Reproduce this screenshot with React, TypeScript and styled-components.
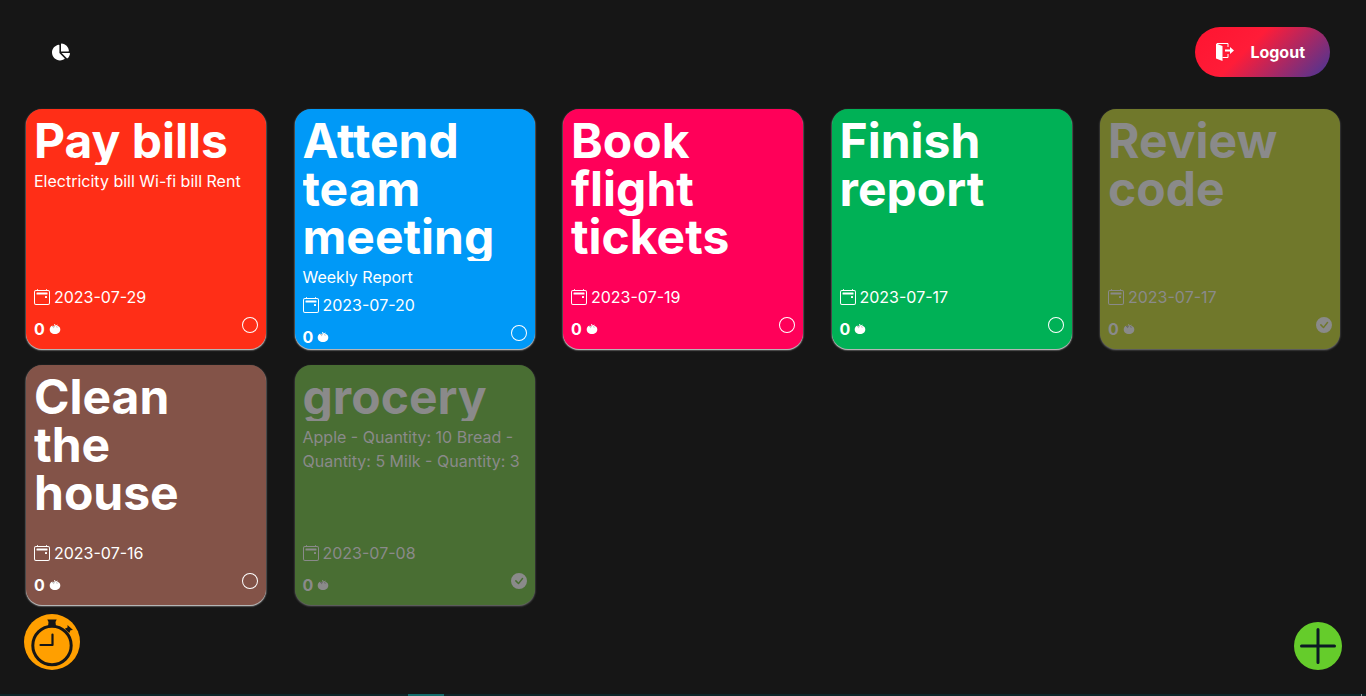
import React from "react";
import styled, { createGlobalStyle } from "styled-components";
import { BsCalendar2Event, BsCircle, BsCheckCircleFill } from "react-icons/bs";
import { FaChartPie } from "react-icons/fa";

const GlobalStyle = createGlobalStyle`
  *, *::before, *::after { box-sizing: border-box; }
  html, body { margin: 0; background: #161616; }
  body { font-family: Inter, sans-serif; font-size: 16px; line-height: 24px; color: #fff; }
  button { font: inherit; color: inherit; border: 0; padding: 0; cursor: pointer; }
  svg { display: block; flex-shrink: 0; }
`;

const Page = styled.div`
  min-height: 100vh;
  display: flex;
  flex-direction: column;
`;

const Header = styled.header`
  display: flex;
  align-items: center;
  justify-content: space-between;
  padding: 27px 36px 32px 52px;
`;

const StatsLink = styled.a`
  color: #fff;
  font-size: 18px;
`;

const LogoutButton = styled.button`
  display: flex;
  align-items: center;
  gap: 16px;
  height: 50px;
  padding: 0 25px 0 21px;
  border-radius: 25px;
  background: linear-gradient(135deg, #ff1430 0%, #ff1c38 40%, #433698 100%);
  font-weight: 700;
`;

const Board = styled.main`
  display: grid;
  grid-template-columns: repeat(auto-fill, 240px);
  justify-content: space-between;
  gap: 16px;
  padding: 0 26px;
`;

const Card = styled.article<{ $color: string; $done?: boolean }>`
  display: flex;
  flex-direction: column;
  height: 240px;
  padding: 8px;
  border-radius: 16px;
  background: ${(p) => p.$color};
  box-shadow: ${(p) =>
    p.$done ? "0 1px 2px #777" : "0 1px 1px #bbb, 0 1px 2px #aaa"};
  color: ${(p) => (p.$done ? "#8a8a8a" : "#fff")};
`;

const CardBody = styled.div`
  flex: 1 0 auto;
  padding-bottom: 4px;
`;

const Title = styled.h2`
  margin: 0 0 4px;
  padding-right: 8px;
  overflow: hidden;
  font-size: 48px;
  line-height: 48px;
  font-weight: 700;
`;

const Description = styled.p`
  margin: 0;
`;

const DueDate = styled.div`
  display: flex;
  align-items: center;
  gap: 4px;
`;

const CardFooter = styled.footer`
  display: flex;
  flex-shrink: 0;
  align-items: flex-start;
  justify-content: space-between;
  height: 32px;
`;

const Count = styled.span`
  display: flex;
  align-items: center;
  gap: 4px;
  padding-top: 8px;
  font-weight: 700;
`;

const ToggleButton = styled.button`
  display: grid;
  place-items: center;
  height: 32px;
  background: none;
`;

const Actions = styled.div`
  display: flex;
  align-items: center;
  justify-content: space-between;
  padding: 9px 24px 0;
`;

const RoundButton = styled.button<{ $size: number; $color: string }>`
  display: grid;
  place-items: center;
  width: ${(p) => p.$size}px;
  height: ${(p) => p.$size}px;
  border-radius: 50%;
  background: ${(p) => p.$color};
  color: #161616;
`;

const AddButton = styled(RoundButton)`
  margin-top: 8px;
  color: #0c1a24;
`;

const BottomEdge = styled.div`
  display: flex;
  justify-content: space-between;
  height: 2px;
  margin-top: auto;
  padding: 0 4px 0 408px;
  background: #0d2528;
`;

const ActiveMark = styled.span`
  width: 36px;
  background: #136c6b;
`;

const EdgeTick = styled.span`
  width: 1px;
  background: #8a9a98;
`;

const ExitIcon = () => (
  <svg width="18" height="18" viewBox="0 0 18 18" fill="currentColor" aria-hidden="true">
    <path d="M0 .5 6.500 3v15L0 15.500z" />
    <path d="M1 .5h11v3.500M6.500 14.500H12V11" fill="none" stroke="currentColor" />
    <path d="M9 6.500h5V4l4 3.500-4 3.500V8.500H9z" />
  </svg>
);

const TomatoIcon = () => (
  <svg width="12" height="12" viewBox="0 0 12 12" fill="currentColor" aria-hidden="true">
    <path d="M5.600 3 5 1.200l1-.2.6 1.600 2.200-1L8.200 2.800c1.900.4 3.100 1.700 3.100 3.600 0 2.700-2.200 4.600-5.300 4.600S.7 9.100.7 6.400C.7 4.700 1.600 3.400 3 2.800z" />
    <path d="m3 3.500 2.500.2-1.300 1.200M7 3.600l1.700.7" fill="none" stroke="#000" strokeOpacity=".4" strokeWidth=".6" />
  </svg>
);

const StopwatchIcon = () => (
  <svg width="46" height="50" viewBox="0 0 46 50" fill="none" stroke="currentColor" aria-hidden="true">
    <circle cx="23" cy="28.500" r="19.200" strokeWidth="3" />
    <path d="M23.500 17.500v10.500H11.500" strokeWidth="2.200" strokeLinecap="round" strokeLinejoin="round" />
    <path d="M18.300 2.500h9.400l-1.200 2.500.5 4.500h-8l.5-4.500z" fill="currentColor" stroke="none" />
    <path d="m38.500 8 5.500 5-2.500.3-1.200 2.700-4.500-4.200 2.700-1.300z" fill="currentColor" stroke="none" />
  </svg>
);

const PlusIcon = () => (
  <svg width="36" height="36" viewBox="0 0 36 36" fill="none" stroke="currentColor" strokeWidth="3" strokeLinecap="round" aria-hidden="true">
    <path d="M18 1.500v33M1.500 18h33" />
  </svg>
);

type Task = { title: string; text?: string; date: string; color: string; done?: boolean };

const tasks: Task[] = [
  { title: "Pay bills", text: "Electricity bill Wi-fi bill Rent", date: "2023-07-29", color: "#ff2e17" },
  { title: "Attend team meeting", text: "Weekly Report", date: "2023-07-20", color: "#0099f7" },
  { title: "Book flight tickets", date: "2023-07-19", color: "#ff0059" },
  { title: "Finish report", date: "2023-07-17", color: "#00b156" },
  { title: "Review code", date: "2023-07-17", color: "#70782b", done: true },
  { title: "Clean the house", date: "2023-07-16", color: "#835348" },
  { title: "grocery", text: "Apple - Quantity: 10 Bread - Quantity: 5 Milk - Quantity: 3", date: "2023-07-08", color: "#496e33", done: true },
];

const TaskCard = ({ task }: { task: Task }) => (
  <Card $color={task.color} $done={task.done}>
    <CardBody>
      <Title>{task.title}</Title>
      {task.text && <Description>{task.text}</Description>}
    </CardBody>
    <DueDate>
      <BsCalendar2Event size={16} />
      <time dateTime={task.date}>{task.date}</time>
    </DueDate>
    <CardFooter>
      <Count>
        0 <TomatoIcon />
      </Count>
      <ToggleButton type="button" aria-label={"Toggle " + task.title}>
        {task.done ? <BsCheckCircleFill size={16} /> : <BsCircle size={16} />}
      </ToggleButton>
    </CardFooter>
  </Card>
);

export default function App() {
  return (
    <Page>
      <GlobalStyle />
      <Header>
        <StatsLink href="#stats" aria-label="Statistics">
          <FaChartPie />
        </StatsLink>
        <LogoutButton type="button">
          <ExitIcon />
          Logout
        </LogoutButton>
      </Header>
      <Board>
        {tasks.map((task) => (
          <TaskCard key={task.title} task={task} />
        ))}
      </Board>
      <Actions>
        <RoundButton type="button" aria-label="Timer" $size={56} $color="#ff9f00">
          <StopwatchIcon />
        </RoundButton>
        <AddButton type="button" aria-label="Add task" $size={48} $color="#65cc2b">
          <PlusIcon />
        </AddButton>
      </Actions>
      <BottomEdge>
        <ActiveMark />
        <EdgeTick />
      </BottomEdge>
    </Page>
  );
}
